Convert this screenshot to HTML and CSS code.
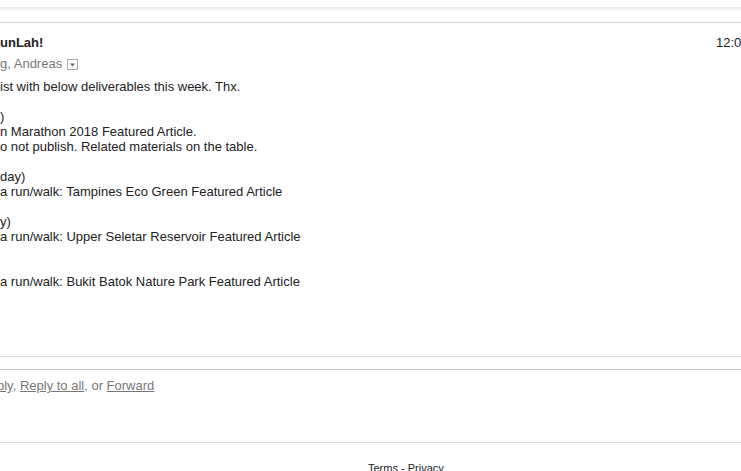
FILE: index.html
```html
<!DOCTYPE html>
<html>
<head>
<meta charset="utf-8">
<link rel="stylesheet" href="styles.css">
</head>
<body>
<div class="page">
  <div class="topbar"></div>
  <div class="topshadow"></div>
  <div class="rule rule-top"></div>
  <div class="msg-head">
    <div class="subject">unLah!</div>
    <div class="time">12:0</div>
  </div>
  <div class="sender">
    <span class="to">g, Andreas</span>
    <span class="dd"><svg width="11" height="11" viewBox="0 0 11 11"><rect x="0.5" y="0.5" width="10" height="10" fill="#fff" stroke="#aaa"/><path d="M3 4.5h5l-2.5 3z" fill="#666"/></svg></span>
  </div>
  <div class="body">
    <div class="ln">ist with below deliverables this week. Thx.</div>
    <div class="ln">&nbsp;</div>
    <div class="ln">)</div>
    <div class="ln">n Marathon 2018 Featured Article.</div>
    <div class="ln">o not publish. Related materials on the table.</div>
    <div class="ln">&nbsp;</div>
    <div class="ln">day)</div>
    <div class="ln">a run/walk: Tampines Eco Green Featured Article</div>
    <div class="ln">&nbsp;</div>
    <div class="ln">y)</div>
    <div class="ln">a run/walk: Upper Seletar Reservoir Featured Article</div>
    <div class="ln">&nbsp;</div>
    <div class="ln">&nbsp;</div>
    <div class="ln">a run/walk: Bukit Batok Nature Park Featured Article</div>
  </div>
  <div class="rule rule-msg"></div>
  <div class="rule rule-reply"></div>
  <div class="reply">
    <a href="#">ply</a>, <a href="#">Reply to all</a>, or <a href="#">Forward</a>
  </div>
  <div class="rule rule-foot"></div>
  <div class="footer">Terms - Privacy</div>
</div>
</body>
</html>
```
FILE: styles.css
```css
html, body {
  margin: 0;
  padding: 0;
  overflow: hidden;
  background: #fff;
}
body {
  font-family: "Liberation Sans", Arial, sans-serif;
  font-size: 13px;
  line-height: 15px;
  color: #222;
}
.page {
  width: 741px;
}
.topbar {
  height: 7px;
  background: #fff;
}
.topshadow {
  height: 4px;
  background: linear-gradient(#e9e9e9, #f6f6f6 60%, #fff);
}
.rule {
  height: 1px;
  width: 741px;
}
.rule-top {
  margin-top: 11px;
  background: #d6d6d6;
}
.msg-head {
  display: grid;
  grid-template-columns: 716px 25px;
  margin-top: 12px;
  white-space: nowrap;
}
.subject {
  font-weight: bold;
  color: #222;
}
.time {
  color: #222;
}
.sender {
  margin-top: 6px;
  display: flex;
  align-items: center;
  gap: 5px;
  color: #777;
}
.dd {
  display: flex;
  margin-top: 1px;
}
.body {
  margin-top: 8px;
  color: #222;
}
.ln {
  white-space: nowrap;
}
.rule-msg {
  margin-top: 67px;
  background: #dcdcdc;
}
.rule-reply {
  margin-top: 12px;
  background: #c4c4c4;
}
.reply {
  margin-top: 8px;
  margin-left: -3px;
  color: #777;
}
.reply a {
  color: #777;
  text-decoration: underline;
}
.rule-foot {
  margin-top: 49px;
  background: #dcdcdc;
}
.footer {
  margin-top: 19px;
  padding-left: 368px;
  font-size: 11px;
  line-height: 13px;
  color: #222;
}
```
